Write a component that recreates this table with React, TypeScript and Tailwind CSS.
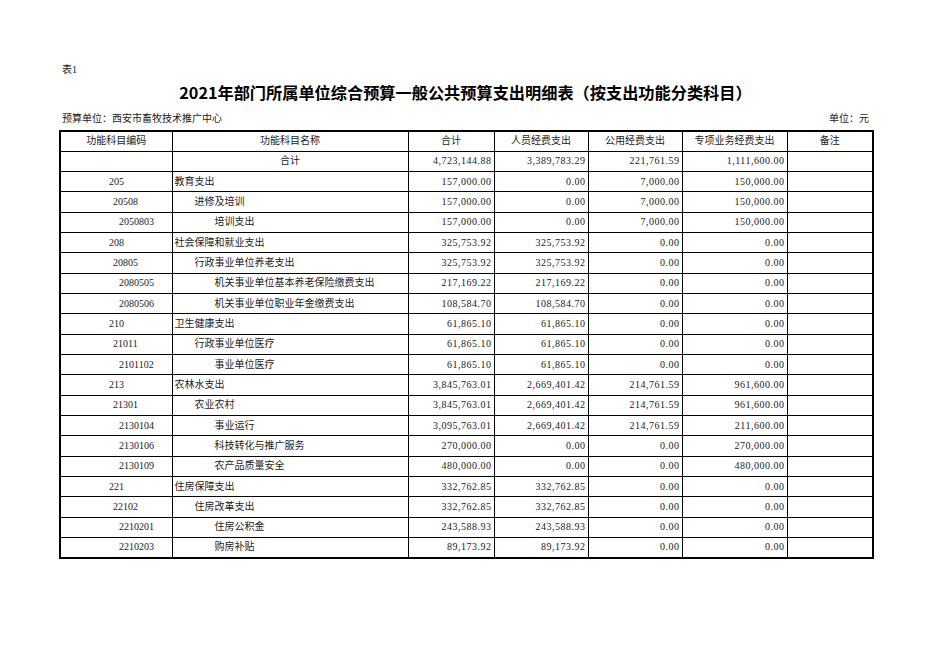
import React from 'react';

type Row = {
  code: string;
  level: 0 | 1 | 2 | 3;
  name: string;
  total: string;
  staff: string;
  pub: string;
  special: string;
};

const rows: Row[] = [
  { code: '', level: 0, name: '合计', total: '4,723,144.88', staff: '3,389,783.29', pub: '221,761.59', special: '1,111,600.00' },
  { code: '205', level: 1, name: '教育支出', total: '157,000.00', staff: '0.00', pub: '7,000.00', special: '150,000.00' },
  { code: '20508', level: 2, name: '进修及培训', total: '157,000.00', staff: '0.00', pub: '7,000.00', special: '150,000.00' },
  { code: '2050803', level: 3, name: '培训支出', total: '157,000.00', staff: '0.00', pub: '7,000.00', special: '150,000.00' },
  { code: '208', level: 1, name: '社会保障和就业支出', total: '325,753.92', staff: '325,753.92', pub: '0.00', special: '0.00' },
  { code: '20805', level: 2, name: '行政事业单位养老支出', total: '325,753.92', staff: '325,753.92', pub: '0.00', special: '0.00' },
  { code: '2080505', level: 3, name: '机关事业单位基本养老保险缴费支出', total: '217,169.22', staff: '217,169.22', pub: '0.00', special: '0.00' },
  { code: '2080506', level: 3, name: '机关事业单位职业年金缴费支出', total: '108,584.70', staff: '108,584.70', pub: '0.00', special: '0.00' },
  { code: '210', level: 1, name: '卫生健康支出', total: '61,865.10', staff: '61,865.10', pub: '0.00', special: '0.00' },
  { code: '21011', level: 2, name: '行政事业单位医疗', total: '61,865.10', staff: '61,865.10', pub: '0.00', special: '0.00' },
  { code: '2101102', level: 3, name: '事业单位医疗', total: '61,865.10', staff: '61,865.10', pub: '0.00', special: '0.00' },
  { code: '213', level: 1, name: '农林水支出', total: '3,845,763.01', staff: '2,669,401.42', pub: '214,761.59', special: '961,600.00' },
  { code: '21301', level: 2, name: '农业农村', total: '3,845,763.01', staff: '2,669,401.42', pub: '214,761.59', special: '961,600.00' },
  { code: '2130104', level: 3, name: '事业运行', total: '3,095,763.01', staff: '2,669,401.42', pub: '214,761.59', special: '211,600.00' },
  { code: '2130106', level: 3, name: '科技转化与推广服务', total: '270,000.00', staff: '0.00', pub: '0.00', special: '270,000.00' },
  { code: '2130109', level: 3, name: '农产品质量安全', total: '480,000.00', staff: '0.00', pub: '0.00', special: '480,000.00' },
  { code: '221', level: 1, name: '住房保障支出', total: '332,762.85', staff: '332,762.85', pub: '0.00', special: '0.00' },
  { code: '22102', level: 2, name: '住房改革支出', total: '332,762.85', staff: '332,762.85', pub: '0.00', special: '0.00' },
  { code: '2210201', level: 3, name: '住房公积金', total: '243,588.93', staff: '243,588.93', pub: '0.00', special: '0.00' },
  { code: '2210203', level: 3, name: '购房补贴', total: '89,173.92', staff: '89,173.92', pub: '0.00', special: '0.00' },
];

const codePad = ['', 'pl-[48px]', 'pl-[52px]', 'pl-[58px]'];
const namePad = ['text-center', 'pl-[2px]', 'pl-[22px]', 'pl-[42px]'];

const cell = 'border border-black h-[20.33px] p-0 whitespace-nowrap';
const num = `${cell} text-right pr-[2px] tracking-[0.5px]`;

export default function App() {
  return (
    <div className="min-h-[662px] w-[936px] bg-white pt-[64px] text-[10px] leading-[12px] text-[#1a1a1a] font-['Liberation_Serif','Noto_Sans_CJK_SC',serif]">
      <div className="ml-[59px] w-[813px]">
        <div className="pl-[3px]">表1</div>

        <h1 className="mt-[6px] text-center text-[16.2px] leading-[20px] font-bold text-black font-['Noto_Sans_CJK_SC',sans-serif]">
          2021年部门所属单位综合预算一般公共预算支出明细表（按支出功能分类科目）
        </h1>

        <div className="mt-[11px] flex justify-between px-[3px]">
          <span>预算单位：西安市畜牧技术推广中心</span>
          <span>单位：元</span>
        </div>

        <table className="mt-[5px] w-[813px] table-fixed border-collapse border-2 border-black">
          <colgroup>
            <col className="w-[112px]" />
            <col className="w-[236px]" />
            <col className="w-[86px]" />
            <col className="w-[94px]" />
            <col className="w-[94px]" />
            <col className="w-[105px]" />
            <col className="w-[86px]" />
          </colgroup>
          <thead>
            <tr>
              <th className={`${cell} font-normal text-center`}>功能科目编码</th>
              <th className={`${cell} font-normal text-center`}>功能科目名称</th>
              <th className={`${cell} font-normal text-center`}>合计</th>
              <th className={`${cell} font-normal text-center`}>人员经费支出</th>
              <th className={`${cell} font-normal text-center`}>公用经费支出</th>
              <th className={`${cell} font-normal text-center`}>专项业务经费支出</th>
              <th className={`${cell} font-normal text-center`}>备注</th>
            </tr>
          </thead>
          <tbody>
            {rows.map((r, i) => (
              <tr key={i}>
                <td className={`${cell} text-left ${codePad[r.level]}`}>{r.code}</td>
                <td className={`${cell} ${r.level === 0 ? 'text-center' : 'text-left'} ${namePad[r.level]}`}>{r.name}</td>
                <td className={num}>{r.total}</td>
                <td className={num}>{r.staff}</td>
                <td className={num}>{r.pub}</td>
                <td className={num}>{r.special}</td>
                <td className={cell}></td>
              </tr>
            ))}
          </tbody>
        </table>
      </div>
    </div>
  );
}
